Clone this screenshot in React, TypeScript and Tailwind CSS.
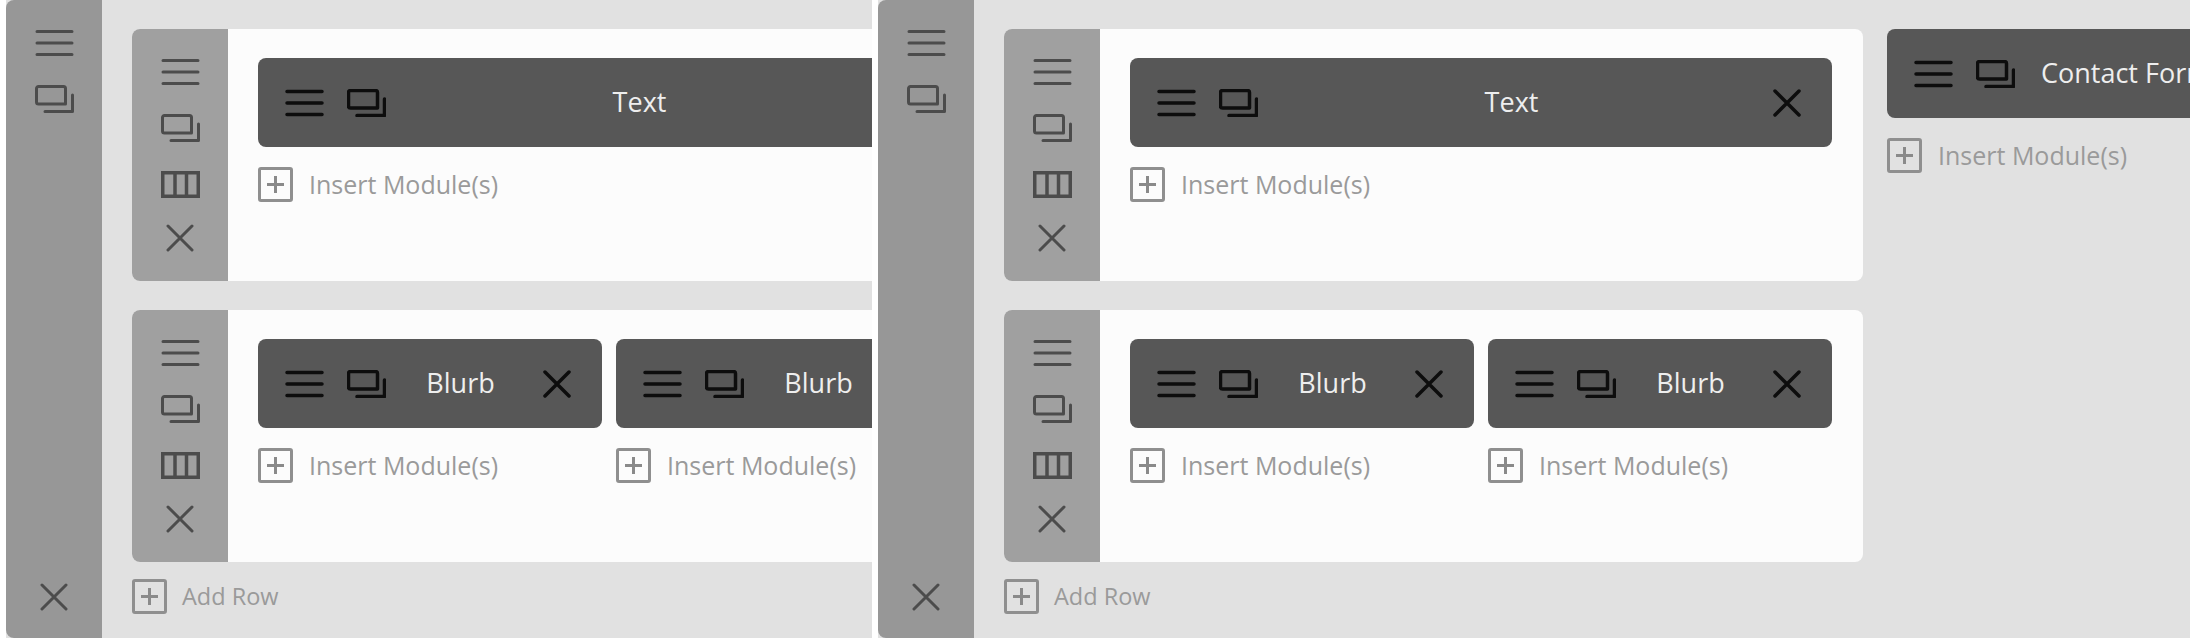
import type { ReactNode } from 'react';

const FONT = "font-['Open_Sans',sans-serif]";

function MenuIcon({ className }: { className: string }) {
  return (
    <svg className={className} width="39" height="28" viewBox="0 0 39 28" fill="none" stroke="currentColor" strokeWidth="3" strokeLinecap="round">
      <path d="M2 2.5h35M2 14h35M2 25.5h35" />
    </svg>
  );
}

function CopyIcon({ className }: { className: string }) {
  return (
    <svg className={className} width="39" height="28" viewBox="0 0 39 28" fill="none" stroke="currentColor" strokeWidth="3" strokeLinejoin="round" strokeLinecap="round">
      <path d="M3.5 1.5h25a2 2 0 0 1 2 2v15.500h-27a2 2 0 0 1-2-2V3.500a2 2 0 0 1 2-2z" />
      <path d="M10 26.500h27.500V10" />
    </svg>
  );
}

function ColumnsIcon({ className }: { className: string }) {
  return (
    <svg className={className} width="39" height="27" viewBox="0 0 39 27" fill="none" stroke="currentColor" strokeWidth="3.500">
      <path d="M1.750 1.750h35.500v23.500h-35.500zM14 1.750v23.500M25.500 1.750v23.500" />
    </svg>
  );
}

function CloseIcon({ className }: { className: string }) {
  return (
    <svg className={className} width="28" height="28" viewBox="0 0 28 28" fill="none" stroke="currentColor" strokeWidth="3" strokeLinecap="round">
      <path d="M2 2l24 24M26 2L2 26" />
    </svg>
  );
}

function PlusBox() {
  return (
    <span className="flex h-[35px] w-[35px] shrink-0 items-center justify-center rounded-[3px] border-[3px] border-[#8f8f8f]">
      <svg width="21" height="21" viewBox="0 0 21 21" fill="none" stroke="#8a8a8a" strokeWidth="3">
        <path d="M10.500 2v17M2 10.500h17" />
      </svg>
    </span>
  );
}

function InsertLink() {
  return (
    <div className="mt-[20px] flex h-[35px] items-center gap-[16px] whitespace-nowrap text-[25px] text-[#9a9a9a]">
      <PlusBox />
      Insert Module(s)
    </div>
  );
}

function ModuleBar({ title, wide }: { title: string; wide?: boolean }) {
  return (
    <div className={`flex h-[89px] items-center rounded-[8px] bg-[#575757] pl-[27px] pr-[31px] text-[#0d0d0d] ${wide ? 'w-[702px]' : 'w-[344px]'}`}>
      <MenuIcon className="shrink-0 [stroke-width:3.5]" />
      <CopyIcon className="ml-[23px] shrink-0 [stroke-width:3.5]" />
      <span className="flex-1 whitespace-nowrap pl-[2px] pr-[10px] text-center text-[27px] text-[#eeeeee]">{title}</span>
      <CloseIcon className="shrink-0 [stroke-width:3.5]" />
    </div>
  );
}

function ContactBar() {
  return (
    <div className="flex h-[89px] w-[400px] items-center rounded-[8px] bg-[#575757] pl-[27px] text-[#0d0d0d]">
      <MenuIcon className="shrink-0 [stroke-width:3.5]" />
      <CopyIcon className="ml-[23px] shrink-0 [stroke-width:3.5]" />
      <span className="ml-[26px] whitespace-nowrap text-[27px] text-[#eeeeee]">Contact Form</span>
    </div>
  );
}

function ModuleCell({ children }: { children: ReactNode }) {
  return <div className="flex flex-col">{children}</div>;
}

function Row({ children }: { children: ReactNode }) {
  return (
    <div className="flex h-[252px] w-[859px] shrink-0 overflow-hidden rounded-[8px] bg-[#fcfcfc]">
      <div className="flex w-[96px] shrink-0 flex-col items-center bg-[#a0a0a0] pt-[29px] text-[#4c4c4c]">
        <MenuIcon className="shrink-0" />
        <CopyIcon className="mt-[28px] shrink-0" />
        <ColumnsIcon className="mt-[29px] shrink-0" />
        <CloseIcon className="mt-[26px] shrink-0" />
      </div>
      <div className="flex flex-1 gap-[14px] pl-[30px] pt-[29px]">{children}</div>
    </div>
  );
}

function Section() {
  return (
    <div className="flex h-[638px] w-[1400px] shrink-0 bg-[#e1e1e1]">
      <div className="flex w-[96px] shrink-0 flex-col items-center justify-between rounded-l-[8px] bg-[#979797] pb-[27px] pt-[29px] text-[#4c4c4c]">
        <div className="flex flex-col items-center gap-[28px]">
          <MenuIcon className="" />
          <CopyIcon className="" />
        </div>
        <CloseIcon className="" />
      </div>
      <div className="flex flex-1 gap-[24px] pl-[30px] pt-[29px]">
        <div className="flex flex-col">
          <div className="flex flex-col gap-[29px]">
            <Row>
              <ModuleCell>
                <ModuleBar title="Text" wide />
                <InsertLink />
              </ModuleCell>
            </Row>
            <Row>
              <ModuleCell>
                <ModuleBar title="Blurb" />
                <InsertLink />
              </ModuleCell>
              <ModuleCell>
                <ModuleBar title="Blurb" />
                <InsertLink />
              </ModuleCell>
            </Row>
          </div>
          <div className="mt-[17px] flex h-[35px] items-center gap-[15px] whitespace-nowrap text-[23.5px] text-[#9a9a9a]">
            <PlusBox />
            Add Row
          </div>
        </div>
        <ModuleCell>
          <ContactBar />
          <InsertLink />
        </ModuleCell>
      </div>
    </div>
  );
}

export default function App() {
  return (
    <div className={`flex h-[641px] w-[2190px] overflow-hidden bg-white ${FONT}`}>
      <div className="h-[641px] w-[872px] shrink-0 overflow-hidden pl-[6px]">
        <Section />
      </div>
      <div className="ml-[6px] h-[641px] w-[1312px] shrink-0 overflow-hidden">
        <Section />
      </div>
    </div>
  );
}
